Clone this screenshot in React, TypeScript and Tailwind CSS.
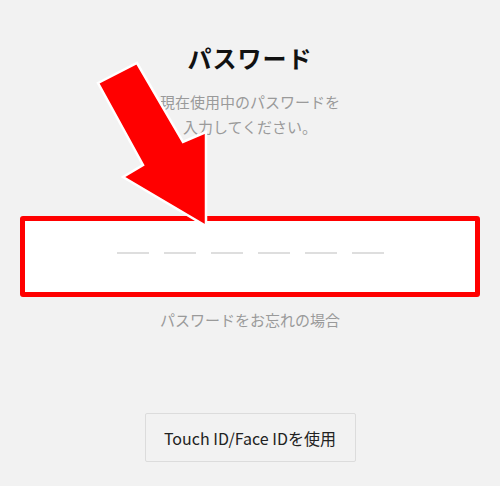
const DASHES = [0, 1, 2, 3, 4, 5];

const Arrow = () => (
  <svg
    className="absolute left-0 top-0 pointer-events-none"
    width="500"
    height="486"
    viewBox="0 0 500 486"
  >
    <polygon
      points="98,83 137,63 183,142 206,132 206,226 123,177 143,165"
      fill="#ff0000"
      stroke="#ffffff"
      strokeWidth="2.5"
      strokeLinejoin="miter"
    />
  </svg>
);

export default function App() {
  return (
    <div
      className="relative w-[500px] h-[486px] bg-[#f2f2f2] overflow-hidden flex flex-col items-center"
      style={{ fontFamily: '"Noto Sans CJK JP", "Noto Sans", sans-serif' }}
    >
      {/* Title */}
      <h1 className="mt-[42px] text-[24px] leading-[32px] font-bold text-[#111] tracking-[1px]">
        パスワード
      </h1>

      {/* Description */}
      <p className="mt-[15px] text-[15px] leading-[25px] text-[#9a9a9a] text-center">
        現在使用中のパスワードを
        <br />
        入力してください。
      </p>

      {/* Passcode field */}
      <div className="mt-[77px] w-[460px] h-[81px] border-[5px] border-[#ff0000] rounded-[3px] bg-white flex items-center justify-center gap-[15px] pb-[7px]">
        {DASHES.map((i) => (
          <span key={i} className="block w-[32px] h-[2px] bg-[#dedede]" />
        ))}
      </div>

      {/* Forgot */}
      <p className="mt-[10px] text-[15px] leading-[25px] text-[#9a9a9a]">
        パスワードをお忘れの場合
      </p>

      {/* Touch ID */}
      <button className="mt-[81px] w-[211px] h-[49px] border border-[#dcdcdc] bg-[#f2f2f2] text-[16px] text-[#222] rounded-[2px]">
        Touch ID/Face IDを使用
      </button>

      <Arrow />
    </div>
  );
}
